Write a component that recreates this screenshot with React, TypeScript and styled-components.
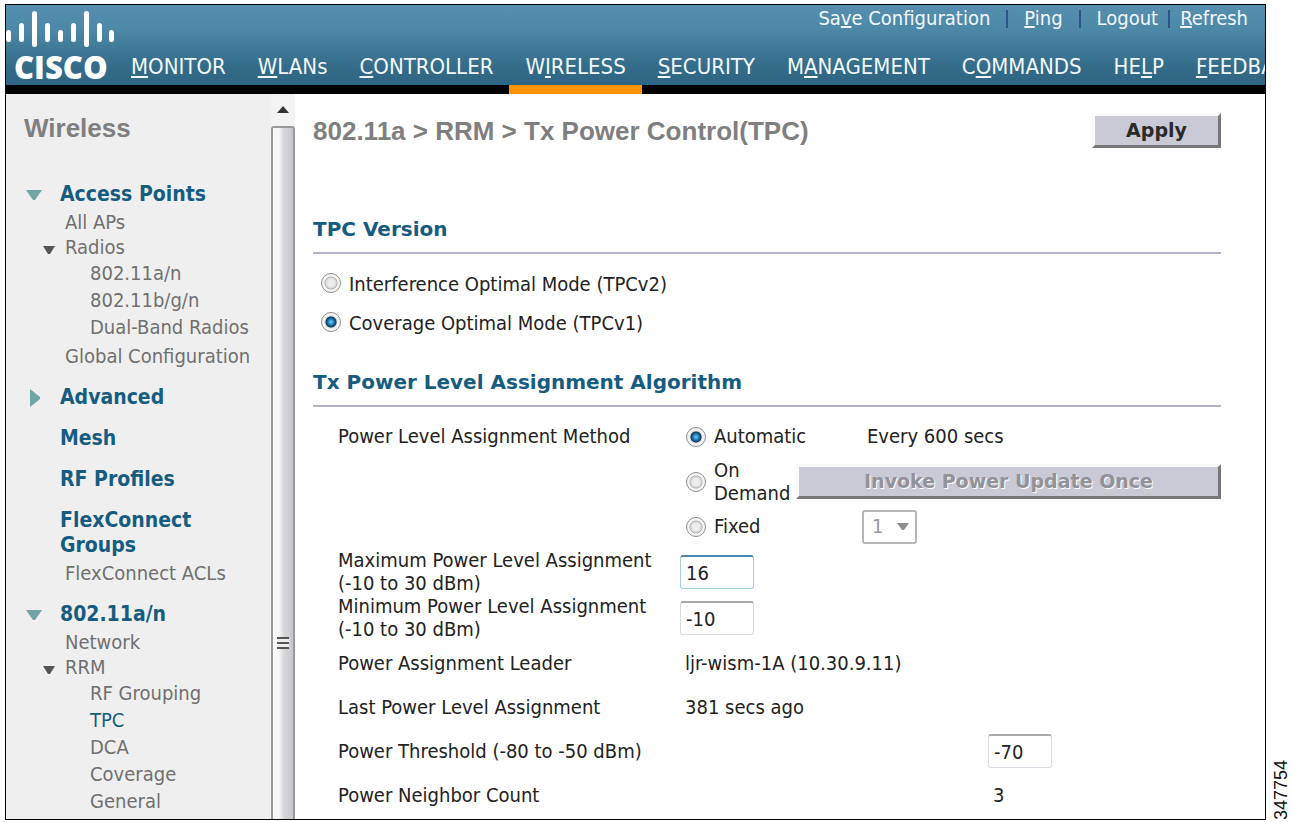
import React from "react";
import styled, { createGlobalStyle, css } from "styled-components";

const GlobalStyle = createGlobalStyle`
  * { box-sizing: border-box; }
  body {
    margin: 0;
    background: #fff;
    color: #222;
    font-family: "DejaVu Sans Condensed", "DejaVu Sans", Verdana, sans-serif;
    font-size: 20px;
    line-height: 23px;
  }
  ul { list-style: none; margin: 0; padding: 0; }
  a { text-decoration: none; }
`;

const Page = styled.div`
  display: flex;
  min-height: 100vh;
  padding: 4px 0 2px 5px;
`;

const Frame = styled.div`
  flex: 1;
  min-width: 0;
  display: flex;
  flex-direction: column;
  overflow: hidden;
  border: 1px solid #000;
`;

const FigureNumber = styled.div`
  width: 26px;
  display: flex;
  align-items: center;
  writing-mode: vertical-rl;
  transform: rotate(180deg);
  color: #111;
  font-family: "Liberation Sans", Arial, sans-serif;
  font-size: 18px;
  line-height: 20px;
  padding-right: 4px;
`;

const Header = styled.header`
  display: flex;
  height: 89px;
  background: linear-gradient(#568fb0, #4d88a8 30%, #326a87 80%, #2d6582);
  background-size: 100% 80px;
  background-repeat: no-repeat;
  background-color: #000;
`;

const Logo = styled.div`
  flex: none;
  width: 109px;
  padding-top: 5px;
  color: #fff;
`;

const LogoBars = styled.svg`
  display: block;
  overflow: visible;
`;

const LogoName = styled.div`
  padding-left: 8px;
  font-family: "Open Sans", sans-serif;
  font-size: 31px;
  font-weight: 800;
  line-height: 38px;
`;

const HeaderRows = styled.div`
  flex: 1;
  min-width: 0;
  display: flex;
  flex-direction: column;
  justify-content: space-between;
`;

const Utilities = styled.div`
  display: flex;
  justify-content: flex-end;
  align-items: center;
  gap: 16px;
  height: 27px;
  padding-right: 17px;
`;

const UtilityLink = styled.a`
  color: #f2f8fb;
`;

const Divider = styled.span<{ $tight?: boolean }>`
  width: 2px;
  height: 18px;
  background: #2f5288;
  margin: ${(p) => (p.$tight ? "0 -6px" : "0")};
`;

const Nav = styled.nav`
  display: flex;
`;

const NavLink = styled.a<{ $active?: boolean }>`
  flex: none;
  height: 41px;
  padding: 0 16px;
  font-size: 22px;
  line-height: 27px;
  color: #f2f8fb;
  border-bottom: 9px solid ${(p) => (p.$active ? "#ff9408" : "#000")};
`;

const Body = styled.div`
  flex: 1;
  display: flex;
`;

const Sidebar = styled.aside`
  flex: none;
  width: 265px;
  padding: 20px 0 0 18px;
  background: #efefef;
`;

const PageTitle = styled.h1`
  margin: 0;
  color: #7f7f7f;
  font-family: "Liberation Sans", Arial, sans-serif;
  font-size: 26px;
  line-height: 28px;
  font-weight: bold;
`;

const Groups = styled.ul`
  display: flex;
  flex-direction: column;
  gap: 16px;
  padding-top: 40px;
`;

const GroupHead = styled.div`
  display: flex;
  align-items: center;
  line-height: 25px;
  font-size: 21px;
  font-weight: bold;
`;

const GroupLink = styled.a`
  flex: 1;
  max-width: 150px;
  color: #155c80;
`;

const Marker = styled.svg`
  flex: none;
  width: 20px;
  height: 20px;
  margin-right: 16px;
  fill: #6fa5a2;
`;

const SubMarker = styled.svg`
  flex: none;
  width: 12px;
  height: 9px;
  margin: 4px 10px 0 0;
  fill: #555;
`;

const Items = styled.ul`
  margin-top: 3px;
`;

const Item = styled.li<{ $parent?: boolean }>`
  display: flex;
  align-items: center;
  line-height: 25px;
  padding-left: ${(p) => (p.$parent ? "19px" : "41px")};
`;

const SubItems = styled.ul`
  padding-bottom: 3px;
  padding-left: 66px;
  line-height: 27px;
`;

const ItemLink = styled.a<{ $current?: boolean }>`
  color: ${(p) => (p.$current ? "#155c80" : "#707070")};
  white-space: nowrap;
`;

const ScrollTrack = styled.div`
  flex: none;
  width: 24px;
  display: flex;
  flex-direction: column;
  background: #f3f3f3;
`;

const ScrollArrow = styled.svg`
  display: block;
  width: 24px;
  height: 32px;
`;

const ScrollThumb = styled.div`
  flex: 1;
  display: flex;
  flex-direction: column;
  align-items: center;
  border: 2px solid #999;
  border-bottom: 0;
  border-radius: 3px 3px 0 0;
  background: linear-gradient(90deg, #f7f7f7 30%, #d6d6da 55%, #c6c6cd);
  &::before {
    content: "";
    flex: 3;
  }
  &::after {
    content: "";
    flex: 1;
  }
`;

const Grip = styled.div`
  width: 12px;
  height: 12px;
  background: repeating-linear-gradient(#555 0 2px, #eee 2px 5px);
`;

const Main = styled.main`
  flex: 1;
  min-width: 0;
  padding: 19px 44px 0 18px;
`;

const TitleBar = styled.div`
  display: flex;
  justify-content: space-between;
  align-items: center;
  height: 35px;
`;

const RaisedButton = styled.button<{ $fill?: boolean }>`
  height: 35px;
  padding: 0;
  width: ${(p) => (p.$fill ? "100%" : "129px")};
  border: 3px solid;
  border-color: #fafafb #777 #777 #fafafb;
  background: #c9cad5;
  color: #2a2a2a;
  font: bold 19px/23px "DejaVu Sans", Verdana, sans-serif;
  &:disabled {
    color: #929298;
    text-shadow: 1px 1px 0 #fff;
  }
`;

const Section = styled.section<{ $first?: boolean }>`
  padding-top: ${(p) => (p.$first ? "68px" : "26px")};
`;

const SectionTitle = styled.h2`
  margin: 0;
  height: 38px;
  border-bottom: 2px solid #b1b1cd;
  color: #155c80;
  font-family: "DejaVu Sans", Verdana, sans-serif;
  font-size: 20px;
  line-height: 26px;
`;

const Versions = styled.div`
  display: flex;
  flex-direction: column;
  padding: 11px 0 0 8px;
`;

const RadioLabel = styled.label<{ $tall?: boolean }>`
  display: flex;
  align-items: center;
  gap: 8px;
  ${(p) => p.$tall && css`
    height: 39px;
    input { margin-bottom: 4px; }
  `}
`;

const Radio = styled.input.attrs({ type: "radio" })`
  appearance: none;
  flex: none;
  width: 20px;
  height: 20px;
  margin: 0;
  border: 1px solid #8d8d8d;
  border-radius: 50%;
  background: radial-gradient(circle at 50% 50%, #ededed 0 3px, #dcdcdc 5px, #b4b4b4 6px, #f4f4f4 7px);
  &:checked {
    background: radial-gradient(circle at 50% 50%, #6fd0f8 0, #1d7db5 3px, #0c3a5c 5px, #d8d8d8 6px, #f4f4f4 7px);
  }
`;

const Rows = styled.div`
  padding: 7px 0 0 25px;
`;

const Row = styled.div<{ $far?: boolean; $tall?: boolean }>`
  display: grid;
  grid-template-columns: ${(p) => (p.$far ? "650px" : "342px")} minmax(0, 1fr);
  align-items: center;
  height: ${(p) => (p.$tall ? "46px" : "44px")};
`;

const Methods = styled.div`
  display: grid;
  grid-template-columns: 110px minmax(0, 1fr);
  grid-auto-rows: 45px;
  align-items: center;
  column-gap: 6px;
`;

const MethodRow = styled.div`
  display: grid;
  grid-template-columns: 342px minmax(0, 1fr);
`;

const MethodLabel = styled.span`
  line-height: 45px;
`;

const MethodOption = styled.div`
  padding-left: 6px;
`;

const Indent = styled.div`
  padding-left: 66px;
`;

const Value = styled.span`
  padding-left: 5px;
`;

const TextBox = styled.input<{ $focused?: boolean; $narrow?: boolean }>`
  width: ${(p) => (p.$narrow ? "64px" : "74px")};
  height: 34px;
  padding: 0 5px;
  border: 2px solid;
  border-width: 2px 1px 1px;
  border-color: ${(p) => (p.$focused ? "#4c86b4 #a5cdea #a5cdea" : "#a9a9ad #d9dbe2 #d9dbe2")};
  border-radius: 3px;
  outline: none;
  background: #fff;
  color: #222;
  font: inherit;
`;

const SelectBox = styled.div`
  display: inline-grid;
  align-items: center;
  > * { grid-area: 1 / 1; }
`;

const Select = styled.select`
  appearance: none;
  width: 55px;
  height: 34px;
  padding: 0 8px;
  border: 2px solid #b5b5b5;
  border-radius: 3px;
  background: #fff;
  color: #999;
  opacity: 1;
  font: inherit;
`;

const SelectArrow = styled.svg`
  justify-self: end;
  margin-right: 8px;
  fill: #8f8f8f;
  pointer-events: none;
`;

type Caption = [before: string, key: string, after: string];

const utilities: Caption[] = [
  ["Sa", "v", "e Configuration"],
  ["", "P", "ing"],
  ["Lo", "g", "out"],
  ["", "R", "efresh"],
];

const menu: Caption[] = [
  ["", "M", "ONITOR"],
  ["", "W", "LANs"],
  ["", "C", "ONTROLLER"],
  ["W", "I", "RELESS"],
  ["", "S", "ECURITY"],
  ["M", "A", "NAGEMENT"],
  ["C", "O", "MMANDS"],
  ["HE", "L", "P"],
  ["", "F", "EEDBACK"],
];

interface TreeItem {
  label: string;
  children?: string[];
}

interface TreeGroup {
  label: string;
  state?: "open" | "closed";
  items?: TreeItem[];
}

const tree: TreeGroup[] = [
  {
    label: "Access Points",
    state: "open",
    items: [
      { label: "All APs" },
      { label: "Radios", children: ["802.11a/n", "802.11b/g/n", "Dual-Band Radios"] },
      { label: "Global Configuration" },
    ],
  },
  { label: "Advanced", state: "closed" },
  { label: "Mesh" },
  { label: "RF Profiles" },
  { label: "FlexConnect Groups", items: [{ label: "FlexConnect ACLs" }] },
  {
    label: "802.11a/n",
    state: "open",
    items: [
      { label: "Network" },
      { label: "RRM", children: ["RF Grouping", "TPC", "DCA", "Coverage", "General"] },
    ],
  },
];

const AccessKey = ({ text: [before, key, after] }: { text: Caption }) => (
  <>
    {before}
    <u>{key}</u>
    {after}
  </>
);

const bars: [x: number, top: number, bottom: number][] = [
  [2, 20, 32],
  [15, 13, 32],
  [28, 1, 37],
  [41, 13, 32],
  [54, 20, 32],
  [67, 13, 32],
  [80, 1, 37],
  [93, 13, 32],
  [105, 20, 32],
];

const CiscoLogo = () => (
  <Logo>
    <LogoBars width="108" height="38" aria-hidden="true">
      {bars.map(([x, top, bottom]) => (
        <rect key={x} x={x - 2} y={top} width="5" height={bottom - top} rx="2.5" fill="#fff" />
      ))}
    </LogoBars>
    <LogoName>CISCO</LogoName>
  </Logo>
);

const SideTree = () => (
  <Groups>
    {tree.map((group) => (
      <li key={group.label}>
        <GroupHead>
          <Marker viewBox="0 0 20 20" aria-hidden="true">
            {group.state === "open" && <path d="M2 5h16l-7 10h-2z" />}
            {group.state === "closed" && <path d="M6 1l10 8v2l-10 8z" />}
          </Marker>
          <GroupLink href="#">{group.label}</GroupLink>
        </GroupHead>
        {group.items && (
          <Items>
            {group.items.map((item) => (
              <React.Fragment key={item.label}>
                <Item $parent={!!item.children}>
                  {item.children && (
                    <SubMarker viewBox="0 0 12 9" aria-hidden="true">
                      <path d="M0 1h12L7 9H5z" />
                    </SubMarker>
                  )}
                  <ItemLink href="#">{item.label}</ItemLink>
                </Item>
                {item.children && (
                  <li>
                    <SubItems>
                      {item.children.map((child) => (
                        <li key={child}>
                          <ItemLink href="#" $current={child === "TPC"}>
                            {child}
                          </ItemLink>
                        </li>
                      ))}
                    </SubItems>
                  </li>
                )}
              </React.Fragment>
            ))}
          </Items>
        )}
      </li>
    ))}
  </Groups>
);

export default function App() {
  return (
    <>
      <GlobalStyle />
      <Page>
        <Frame>
          <Header>
            <CiscoLogo />
            <HeaderRows>
              <Utilities>
                {utilities.map((text, i) => (
                  <React.Fragment key={text.join("")}>
                    {i > 0 && <Divider $tight={i === 3} />}
                    <UtilityLink href="#">
                      <AccessKey text={text} />
                    </UtilityLink>
                  </React.Fragment>
                ))}
              </Utilities>
              <Nav>
                {menu.map((text) => (
                  <NavLink key={text.join("")} href="#" $active={text[2] === "RELESS"}>
                    <AccessKey text={text} />
                  </NavLink>
                ))}
              </Nav>
            </HeaderRows>
          </Header>
          <Body>
            <Sidebar>
              <PageTitle as="h2">Wireless</PageTitle>
              <SideTree />
            </Sidebar>
            <ScrollTrack aria-hidden="true">
              <ScrollArrow viewBox="0 0 24 32">
                <path d="M6 19l6-7 6 7z" fill="#333" />
              </ScrollArrow>
              <ScrollThumb>
                <Grip />
              </ScrollThumb>
            </ScrollTrack>
            <Main>
              <TitleBar>
                <PageTitle>802.11a &gt; RRM &gt; Tx Power Control(TPC)</PageTitle>
                <RaisedButton type="button">Apply</RaisedButton>
              </TitleBar>
              <Section $first>
                <SectionTitle>TPC Version</SectionTitle>
                <Versions>
                  <RadioLabel $tall>
                    <Radio name="version" />
                    Interference Optimal Mode (TPCv2)
                  </RadioLabel>
                  <RadioLabel $tall>
                    <Radio name="version" defaultChecked />
                    Coverage Optimal Mode (TPCv1)
                  </RadioLabel>
                </Versions>
              </Section>
              <Section>
                <SectionTitle>Tx Power Level Assignment Algorithm</SectionTitle>
                <Rows>
                  <MethodRow>
                    <MethodLabel>Power Level Assignment Method</MethodLabel>
                    <Methods>
                      <MethodOption>
                        <RadioLabel>
                          <Radio name="method" defaultChecked />
                          Automatic
                        </RadioLabel>
                      </MethodOption>
                      <Indent>
                        <Value>Every 600 secs</Value>
                      </Indent>
                      <MethodOption>
                        <RadioLabel>
                          <Radio name="method" />
                          On Demand
                        </RadioLabel>
                      </MethodOption>
                      <RaisedButton type="button" $fill disabled>
                        Invoke Power Update Once
                      </RaisedButton>
                      <MethodOption>
                        <RadioLabel>
                          <Radio name="method" />
                          Fixed
                        </RadioLabel>
                      </MethodOption>
                      <Indent>
                        <SelectBox>
                          <Select aria-label="Fixed power level" disabled>
                            <option>1</option>
                          </Select>
                          <SelectArrow width="12" height="8" aria-hidden="true">
                            <path d="M0 0h12L7 7H5z" />
                          </SelectArrow>
                        </SelectBox>
                      </Indent>
                    </Methods>
                  </MethodRow>
                  <Row $tall>
                    <label htmlFor="max-power">
                      Maximum Power Level Assignment
                      <br />
                      (-10 to 30 dBm)
                    </label>
                    <TextBox id="max-power" defaultValue="16" $focused />
                  </Row>
                  <Row $tall>
                    <label htmlFor="min-power">
                      Minimum Power Level Assignment
                      <br />
                      (-10 to 30 dBm)
                    </label>
                    <TextBox id="min-power" defaultValue="-10" />
                  </Row>
                  <Row>
                    <span>Power Assignment Leader</span>
                    <Value>ljr-wism-1A (10.30.9.11)</Value>
                  </Row>
                  <Row>
                    <span>Last Power Level Assignment</span>
                    <Value>381 secs ago</Value>
                  </Row>
                  <Row $far>
                    <label htmlFor="threshold">Power Threshold (-80 to -50 dBm)</label>
                    <TextBox id="threshold" defaultValue="-70" $narrow />
                  </Row>
                  <Row $far>
                    <span>Power Neighbor Count</span>
                    <Value>3</Value>
                  </Row>
                </Rows>
              </Section>
            </Main>
          </Body>
        </Frame>
        <FigureNumber>347754</FigureNumber>
      </Page>
    </>
  );
}
